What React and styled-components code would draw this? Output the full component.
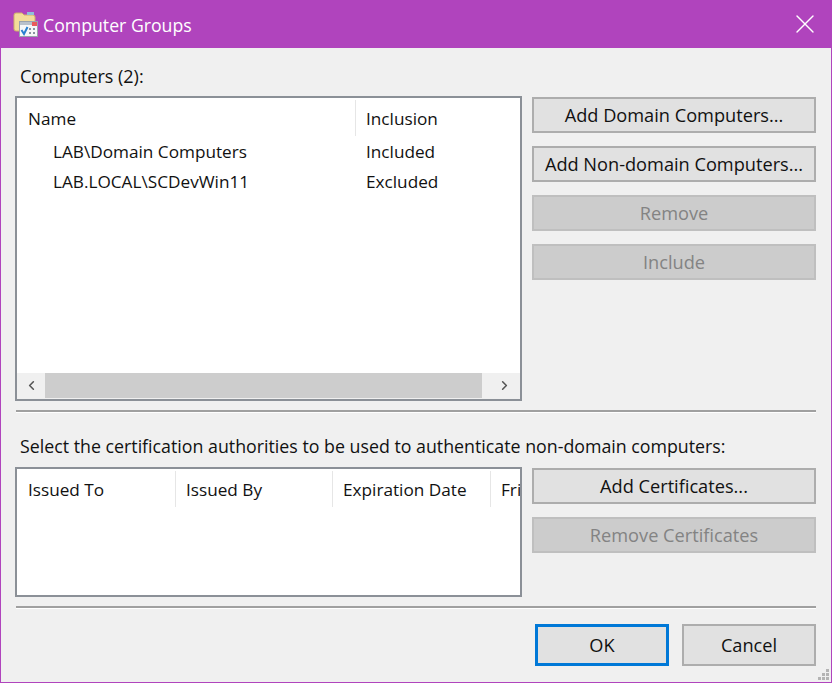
import React from "react";
import styled, { createGlobalStyle } from "styled-components";
import { ChevronLeft, ChevronRight, X } from "lucide-react";

const Global = createGlobalStyle`
  html, body {
    margin: 0;
    padding: 0;
    background: #f0f0f0;
  }
  * {
    box-sizing: border-box;
  }
`;

const Dialog = styled.div`
  position: relative;
  width: 832px;
  height: 683px;
  display: flex;
  flex-direction: column;
  background: #f0f0f0;
  border: 1px solid #b044bd;
  border-top: 0;
  font-family: "Open Sans", "Noto Sans", sans-serif;
  font-size: 18px;
  color: #111;
  overflow: hidden;
`;
const TitleBar = styled.div`
  height: 48px;
  flex: none;
  display: flex;
  align-items: center;
  background: #b044bd;
  color: #fff;
  padding: 0 10px 0 12px;
`;
const TitleText = styled.span`
  margin-left: 4px;
  padding-top: 2px;
  font-size: 17.7px;
  flex: 1;
`;
const Body = styled.div`
  flex: 1;
  display: flex;
  flex-direction: column;
  padding: 16px 15px 0 14px;
`;
const Label = styled.div`
  height: ${(p) => p.$height || 32}px;
  line-height: 24px;
  padding-left: 5px;
  font-size: ${(p) => p.$size || 18}px;
  white-space: nowrap;
`;
const Section = styled.div`
  display: flex;
  gap: 10px;
`;
const ListBox = styled.div`
  width: 507px;
  height: ${(p) => p.$height}px;
  flex: none;
  display: flex;
  flex-direction: column;
  background: #fff;
  border: 2px solid #8b9097;
  font-size: 17.2px;
  overflow: hidden;
`;
const HeaderRow = styled.div`
  height: 40px;
  flex: none;
  display: flex;
  padding: 2px 0 0 1px;
`;
const HeaderCell = styled.div`
  width: ${(p) => p.$width}px;
  flex: none;
  height: 36px;
  line-height: 38px;
  padding-left: 10px;
  border-right: 1px solid #e6e6e6;
  white-space: nowrap;
  overflow: hidden;
  &:last-child {
    border-right: 0;
  }
`;
const Rows = styled.div`
  flex: 1;
`;
const Row = styled.div`
  height: 30px;
  display: flex;
  line-height: 28px;
`;
const NameCell = styled.div`
  width: 339px;
  padding-left: 36px;
`;
const ValueCell = styled.div`
  padding-left: 10px;
`;
const ScrollBar = styled.div`
  height: 26px;
  flex: none;
  display: flex;
  align-items: center;
  padding: 0 2px 1px 0;
  background: #f0f0f0;
`;
const ScrollArrow = styled.div`
  width: 28px;
  height: 25px;
  flex: none;
  display: flex;
  align-items: center;
  justify-content: center;
  color: #555;
`;
const ScrollThumb = styled.div`
  width: 437px;
  height: 25px;
  background: #cdcdcd;
`;
const ScrollTrack = styled.div`
  flex: 1;
`;
const ButtonColumn = styled.div`
  display: flex;
  flex-direction: column;
  gap: 13px;
  padding-top: 1px;
`;
const Button = styled.div`
  width: ${(p) => p.$width || 284}px;
  height: ${(p) => p.$height || 36}px;
  display: flex;
  align-items: center;
  justify-content: center;
  font-size: 18.2px;
  background: ${(p) => (p.$disabled ? "#cccccc" : "#e1e1e1")};
  border: ${(p) =>
    p.$primary ? "3px solid #0078d7" : p.$disabled ? "2px solid #bfbfbf" : "2px solid #adadad"};
  color: ${(p) => (p.$disabled ? "#838383" : "#111")};
  white-space: nowrap;
`;
const Separator = styled.div`
  height: 3px;
  margin: ${(p) => p.$top}px 0 ${(p) => p.$bottom || 0}px 1px;
  flex: none;
  border-top: 2px solid #a0a0a0;
  border-bottom: 1px solid #fff;
`;
const Footer = styled.div`
  display: flex;
  justify-content: flex-end;
  gap: 13px;
  margin-top: 15px;
`;
const Grip = styled.svg`
  position: absolute;
  right: 1px;
  bottom: 1px;
`;

const FolderIcon = () => (
  <svg width="26" height="26" viewBox="0 0 26 26">
    <path d="M1 4 Q1 2 3 2 H9 L11 4 H20 Q22 4 22 6 V20 H3 Q1 20 1 18 Z" fill="#f3dc9a" stroke="#cdb06a" />
    <rect x="14" y="1" width="7" height="3" fill="#8fbddb" />
    <rect x="6.5" y="10.5" width="18" height="15" fill="#f6f7f8" stroke="#9aa3ad" />
    <rect x="7" y="11" width="17" height="3" fill="#b9c1cb" />
    <rect x="19" y="11" width="5" height="4" fill="#ea5a5a" />
    <path d="M8.5 19 L11 23 L14.5 16" fill="none" stroke="#2a7fd0" strokeWidth="2" />
    <path d="M16 17 h2 v2 h-2 z M20 17 h2 v2 h-2 z M16 21 h2 v2 h-2 z M20 21 h2 v2 h-2 z" fill="#8a93a0" />
  </svg>
);

const ResizeGrip = () => (
  <Grip width="13" height="13" viewBox="0 0 13 13" fill="#b4b4b4">
    <rect x="9" y="1" width="3" height="3" />
    <rect x="5" y="5" width="3" height="3" />
    <rect x="9" y="5" width="3" height="3" />
    <rect x="1" y="9" width="3" height="3" />
    <rect x="5" y="9" width="3" height="3" />
    <rect x="9" y="9" width="3" height="3" />
  </Grip>
);

const computers = [
  { name: "LAB\\Domain Computers", inclusion: "Included" },
  { name: "LAB.LOCAL\\SCDevWin11", inclusion: "Excluded" },
];

export default function App() {
  return (
    <>
      <Global />
      <Dialog>
        <TitleBar>
          <FolderIcon />
          <TitleText>Computer Groups</TitleText>
          <X size={32} strokeWidth={1} />
        </TitleBar>
        <Body>
          <Label>Computers (2):</Label>
          <Section>
            <ListBox $height={305}>
              <HeaderRow>
                <HeaderCell $width={338}>Name</HeaderCell>
                <HeaderCell $width={160}>Inclusion</HeaderCell>
              </HeaderRow>
              <Rows>
                {computers.map((c) => (
                  <Row key={c.name}>
                    <NameCell>{c.name}</NameCell>
                    <ValueCell>{c.inclusion}</ValueCell>
                  </Row>
                ))}
              </Rows>
              <ScrollBar>
                <ScrollArrow>
                  <ChevronLeft size={15} strokeWidth={2.5} />
                </ScrollArrow>
                <ScrollThumb />
                <ScrollTrack />
                <ScrollArrow>
                  <ChevronRight size={15} strokeWidth={2.5} />
                </ScrollArrow>
              </ScrollBar>
            </ListBox>
            <ButtonColumn>
              <Button>Add Domain Computers...</Button>
              <Button>Add Non-domain Computers...</Button>
              <Button $disabled>Remove</Button>
              <Button $disabled>Include</Button>
            </ButtonColumn>
          </Section>
          <Separator $top={9} $bottom={21} />
          <Label $size={17.8} $height={33}>
            Select the certification authorities to be used to authenticate non-domain computers:
          </Label>
          <Section>
            <ListBox $height={130}>
              <HeaderRow>
                <HeaderCell $width={158}>Issued To</HeaderCell>
                <HeaderCell $width={157}>Issued By</HeaderCell>
                <HeaderCell $width={158}>Expiration Date</HeaderCell>
                <HeaderCell $width={30}>Fri</HeaderCell>
              </HeaderRow>
            </ListBox>
            <ButtonColumn>
              <Button>Add Certificates...</Button>
              <Button $disabled>Remove Certificates</Button>
            </ButtonColumn>
          </Section>
          <Separator $top={9} />
          <Footer>
            <Button $primary $width={134} $height={42}>
              OK
            </Button>
            <Button $width={134} $height={42}>
              Cancel
            </Button>
          </Footer>
        </Body>
        <ResizeGrip />
      </Dialog>
    </>
  );
}
